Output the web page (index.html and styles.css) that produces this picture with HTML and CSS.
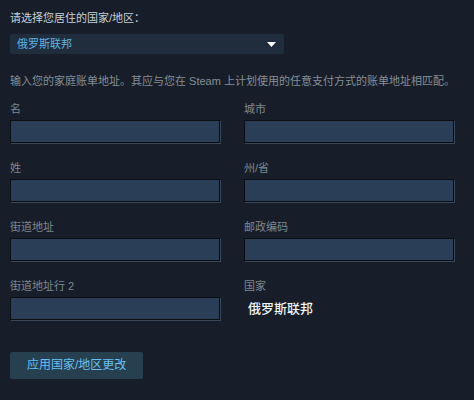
FILE: index.html
```html
<!DOCTYPE html>
<html lang="zh-CN">
<head>
<meta charset="utf-8">
<title>账单地址</title>
<link rel="stylesheet" href="styles.css">
</head>
<body>
<div class="page">
  <div class="title">请选择您居住的国家/地区：</div>
  <div class="select">
    <span class="select-text">俄罗斯联邦</span>
    <svg class="select-arrow" width="9" height="5" viewBox="0 0 9 5"><polygon points="0,0 9,0 4.5,5" fill="#ffffff"/></svg>
  </div>
  <p class="desc">输入您的家庭账单地址。其应与您在 Steam 上计划使用的任意支付方式的账单地址相匹配。</p>
  <div class="form-grid">
    <div class="field">
      <label class="label">名</label>
      <input class="input" type="text">
    </div>
    <div class="field">
      <label class="label">城市</label>
      <input class="input" type="text">
    </div>
    <div class="field">
      <label class="label">姓</label>
      <input class="input" type="text">
    </div>
    <div class="field">
      <label class="label">州/省</label>
      <input class="input" type="text">
    </div>
    <div class="field">
      <label class="label">街道地址</label>
      <input class="input" type="text">
    </div>
    <div class="field">
      <label class="label">邮政编码</label>
      <input class="input" type="text">
    </div>
    <div class="field">
      <label class="label">街道地址行 2</label>
      <input class="input" type="text">
    </div>
    <div class="field">
      <label class="label">国家</label>
      <div class="country">俄罗斯联邦</div>
    </div>
  </div>
  <button class="btn" type="button">应用国家/地区更改</button>
</div>
</body>
</html>
```
FILE: styles.css
```css
html, body {
  margin: 0;
  padding: 0;
  background: #171e29;
}
body {
  font-family: "Liberation Sans", "Noto Sans CJK SC", sans-serif;
  color: #8f98a0;
  width: 474px;
  height: 400px;
  overflow: hidden;
}
.page {
  padding: 10px 10px 0 10px;
}
.title {
  font-size: 11px;
  line-height: 16px;
  color: #c6d0d8;
  margin: 0 0 8px 0;
}
.select {
  width: 274px;
  height: 20px;
  box-sizing: border-box;
  background: #1f2d3d;
  border-radius: 2px;
  display: flex;
  align-items: center;
  justify-content: space-between;
  padding: 0 8px 0 7px;
}
.select-text {
  font-size: 11px;
  color: #5fb3e6;
  line-height: 20px;
}
.select-arrow {
  display: block;
  margin-top: 1px;
}
.desc {
  font-size: 11px;
  line-height: 16px;
  color: #858e97;
  margin: 19px 0 12px 0;
  white-space: nowrap;
}
.form-grid {
  display: grid;
  grid-template-columns: 210px 210px;
  column-gap: 24px;
  row-gap: 17px;
}
.field {
  display: flex;
  flex-direction: column;
}
.label {
  display: block;
  font-size: 11px;
  line-height: 16px;
  color: #7f8891;
  margin-bottom: 3px;
}
.input {
  display: block;
  width: 210px;
  height: 23px;
  box-sizing: border-box;
  margin: 0;
  padding: 0 4px;
  border: 1px solid #0a0d12;
  border-radius: 0;
  background: #2a3e57;
  box-shadow: 1px 1px 0 #3a4759;
  outline: none;
  color: #ffffff;
}
.country {
  height: 23px;
  line-height: 23px;
  padding-left: 4px;
  font-size: 13px;
  font-weight: 500;
  color: #f0f4f7;
}
.btn {
  display: block;
  margin-top: 32px;
  height: 27px;
  padding: 0 17px;
  border: none;
  border-radius: 2px;
  background: #26404f;
  color: #67c1f5;
  font-family: "Liberation Sans", "Noto Sans CJK SC", sans-serif;
  font-size: 12px;
  line-height: 27px;
  cursor: pointer;
}
```
